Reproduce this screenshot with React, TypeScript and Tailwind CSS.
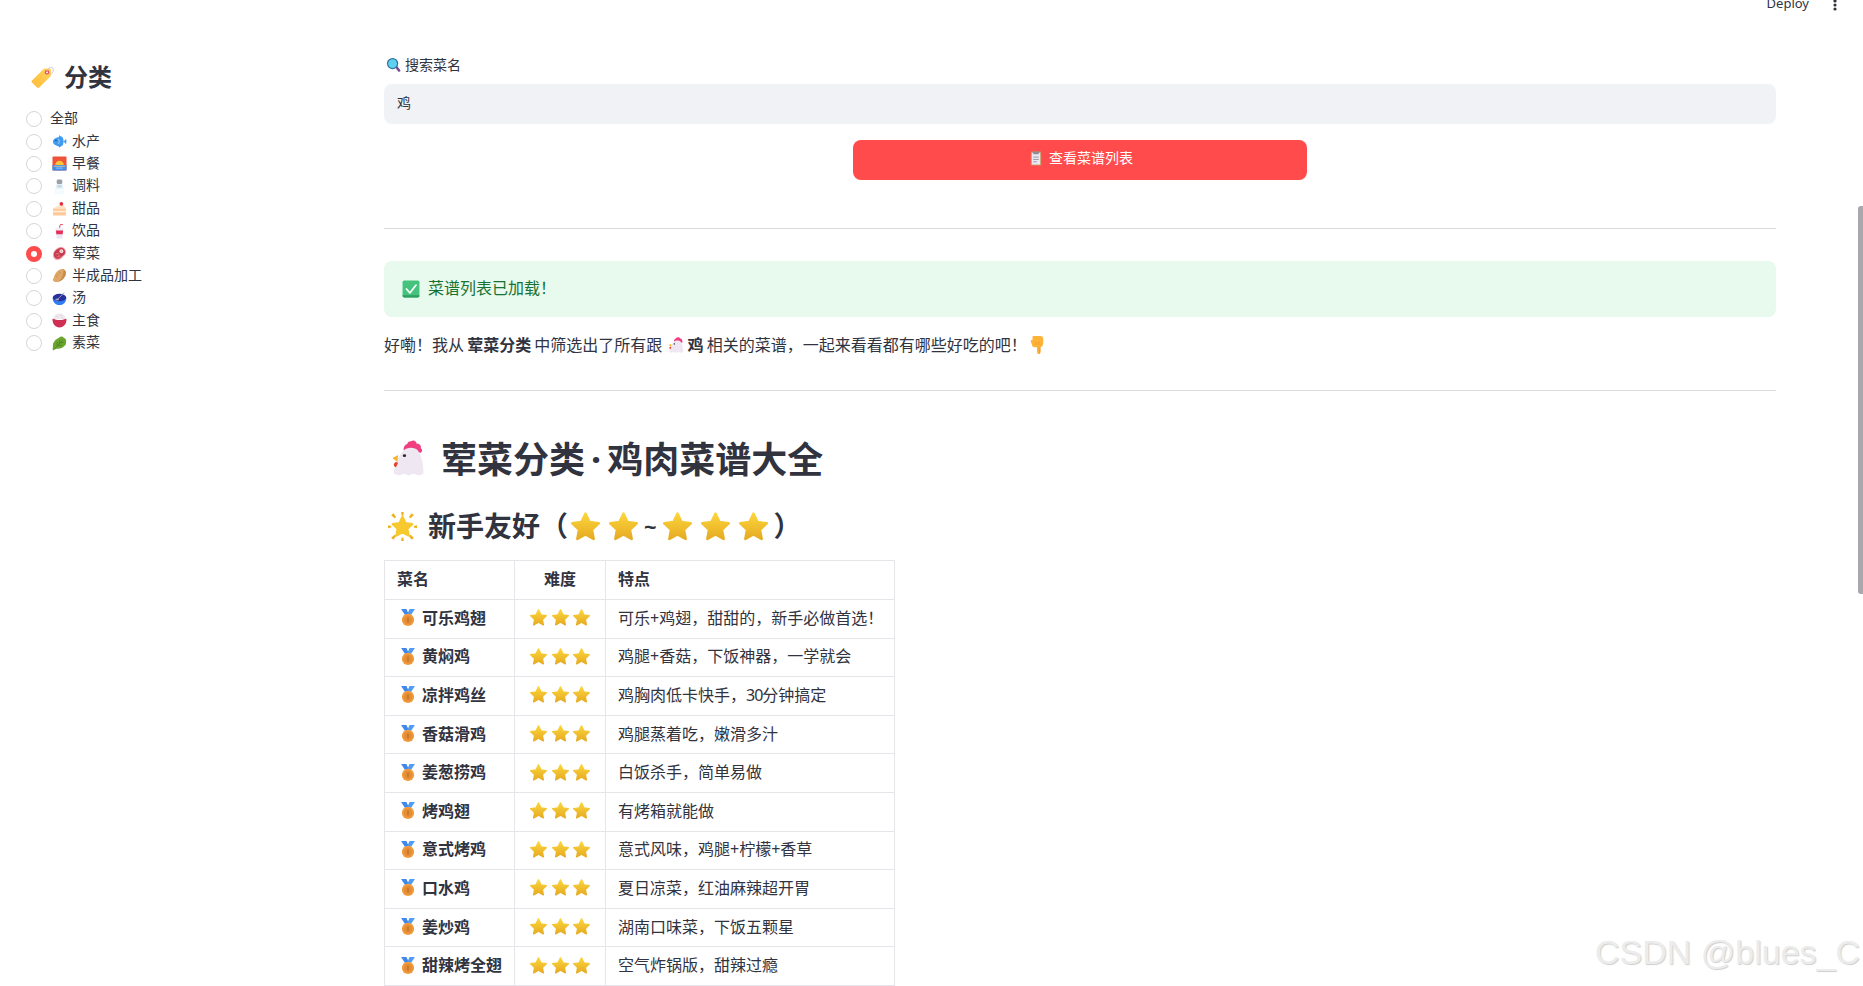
const cjk = "font-['Noto_Sans','Noto_Sans_CJK_SC',sans-serif]";

// --- EMOJI DRAWINGS ---
function Star({ className }: { className: string }) {
  return (
    <svg viewBox="2 2 28 28" className={className}>
      <defs>
        <linearGradient id="starFill" x1="0" y1="0" x2="0" y2="1">
          <stop offset="0" stopColor="#fbd53c" />
          <stop offset="1" stopColor="#e6ab22" />
        </linearGradient>
      </defs>
      <path
        d="M16 3.5l3.900 8.200 8.900 1.200-6.500 6.200 1.600 8.900-7.900-4.300-7.900 4.300 1.600-8.900-6.500-6.200 8.900-1.200z"
        fill="url(#starFill)"
        stroke="url(#starFill)"
        strokeWidth="2.400"
        strokeLinejoin="round"
      />
    </svg>
  );
}

function GlowStar({ className }: { className: string }) {
  return (
    <svg viewBox="0 0 32 32" className={className}>
      <path d="M16 5.500l3.300 6.800 7.400 1-5.400 5.100 1.400 7.400-6.700-3.600-6.700 3.600 1.400-7.400-5.400-5.100 7.400-1z" fill="#f8c92f" stroke="#f8c92f" strokeWidth="2.600" strokeLinejoin="round" />
      <g fill="#f0b21c">
        <path d="M14.500 0h3l-.6 4h-1.800z" />
        <path d="M14.500 32h3l-.6-4h-1.800z" />
        <path d="M0 14.500v3.500l3.500-1v-1.500z" />
        <path d="M32 14.500v3.500l-3.500-1v-1.500z" />
        <path d="M3.500 3.500l2.500-2 3 4-1.800 1.500z" />
        <path d="M28.500 3.500l-2.500-2-3 4 1.800 1.500z" />
        <path d="M3.500 28.500l2.500 2 3-4-1.800-1.500z" />
        <path d="M28.500 28.500l-2.500 2-3-4 1.800-1.500z" />
      </g>
    </svg>
  );
}

function Medal({ className }: { className: string }) {
  return (
    <svg viewBox="0 0 26 32" className={className}>
      <path d="M0 0h10l5 11H7z" fill="#3f87ea" />
      <path d="M26 0H16l-5 11h8z" fill="#4f9bf5" />
      <circle cx="13" cy="20.500" r="11.500" fill="#f09b3e" />
      <circle cx="13" cy="20.500" r="8" fill="#e68c33" />
      <rect x="12" y="16" width="2" height="9" rx="1" fill="#a86a28" />
    </svg>
  );
}

function Tag({ className }: { className: string }) {
  return (
    <svg viewBox="0 0 32 32" className={className}>
      <defs>
        <linearGradient id="tagFill" x1="0" y1="1" x2="1" y2="0">
          <stop offset="0" stopColor="#ffb93b" />
          <stop offset="1" stopColor="#ffd75a" />
        </linearGradient>
      </defs>
      <path d="M2 20.500L17 5.500c.6-.6 1.300-.9 2.200-.9l6.200.2c1 0 1.800.8 1.800 1.800l.2 6.400c0 .8-.3 1.600-.9 2.200L11.500 30c-.8.8-2 .8-2.800 0L2 23.300c-.8-.8-.8-2 0-2.800z" fill="url(#tagFill)" />
      <circle cx="22" cy="9.800" r="3" fill="#e8505b" />
      <circle cx="22" cy="9.800" r="1.300" fill="#fff" />
      <path d="M22 8c1-3.500 4-5.500 6.500-4.500 2.500 1 2.500 4.500.5 7-1 1.200-2.500 2-4 2" fill="none" stroke="#c9bfd8" strokeWidth="1.200" />
    </svg>
  );
}

function Fish() {
  return (
    <svg viewBox="0 0 32 32" className="h-full w-full">
      <path d="M16 2c1.500 3 3 3 5 4 4 2 3 8 4 10l5-6c1 4 1 8 0 12l-5-6c-1 2 0 8-5 10-1 .5-3 2-5 3 0-1-.5-2-1-3C7 25 2 21 2 16S7 8 14 7c1-1 1.500-3 2-5z" fill="#3f9bf0" />
      <circle cx="8.500" cy="14" r="1.500" fill="#10345c" />
      <path d="M14 11c2 3 2 7 0 10" fill="none" stroke="#a5d6fb" strokeWidth="2" />
    </svg>
  );
}

function Sunrise() {
  return (
    <svg viewBox="0 0 32 32" className="h-full w-full">
      <rect x="1" y="1" width="30" height="30" rx="2" fill="#f0533a" />
      <rect x="1" y="19" width="30" height="12" rx="1" fill="#3f8fee" />
      <path d="M7 19a9 9 0 0118 0z" fill="#ffc43a" />
      <rect x="4" y="21" width="24" height="1.500" fill="#ffd27a" />
      <rect x="9" y="25" width="14" height="1.500" fill="#b9dcfb" />
    </svg>
  );
}

function Salt() {
  return (
    <svg viewBox="0 0 32 32" className="h-full w-full">
      <rect x="10" y="1" width="12" height="10" rx="3" fill="#9ba1a6" />
      <path d="M9 11h14l2 17c0 2-1 3-3 3H10c-2 0-3-1-3-3z" fill="#dff1fa" />
      <path d="M8.500 20h15l1 8c0 2-1 3-3 3H10.500c-2 0-3-1-3-3z" fill="#f5fbfe" />
      <rect x="12" y="13" width="8" height="5" fill="#c6d5dc" />
    </svg>
  );
}

function Cake() {
  return (
    <svg viewBox="0 0 32 32" className="h-full w-full">
      <path d="M2 16L22 6l8 10z" fill="#ffe2c4" />
      <path d="M2 16h28v13c0 1-1 2-2 2H4c-1 0-2-1-2-2z" fill="#ffc99a" />
      <rect x="2" y="21" width="28" height="3" fill="#fff0df" />
      <circle cx="20" cy="6" r="4" fill="#e0303e" />
    </svg>
  );
}

function Cup() {
  return (
    <svg viewBox="0 0 32 32" className="h-full w-full">
      <path d="M16 9l1-6c.2-1.200 1-2 2.500-2H23" fill="none" stroke="#e0304a" strokeWidth="2" />
      <rect x="7" y="8" width="18" height="4" rx="1" fill="#f1eef6" />
      <path d="M8 12h16l-2 19H10z" fill="#ebe4f2" />
      <path d="M8.300 14h15.400l-.9 8H9.200z" fill="#e6305a" />
    </svg>
  );
}

function Meat() {
  return (
    <svg viewBox="0 0 32 32" className="h-full w-full">
      <path d="M18 2c6-1 12 4 12 11 0 3-1 6-4 8-4 3-7 9-14 9C6 30 2 25 2 19 2 11 10 3 18 2z" fill="#f3a7ae" />
      <path d="M18 4c5-1 10 3 10 9 0 3-1 5-4 7-4 2-6 7-12 7C7 27 4 23 4 18 4 11 11 5 18 4z" fill="#c83c50" />
      <circle cx="20" cy="11" r="4" fill="#fbe6e0" />
      <circle cx="20" cy="11" r="1.800" fill="#d9b3ae" />
      <path d="M8 18c3-3 5-2 7 0M11 23c3-2 5-2 7-1" stroke="#f0a0ac" strokeWidth="1.500" fill="none" />
    </svg>
  );
}

function Dumpling() {
  return (
    <svg viewBox="0 0 32 32" className="h-full w-full">
      <path d="M24 2c5 2 7 8 5 13-3 8-11 15-19 15-3 0-7-1-8-4-1-2 1-3 2-6C6 11 14 1 24 2z" fill="#e0a868" />
      <path d="M24 2c5 2 7 8 5 13-3 8-9 13-15 14 6-6 12-15 10-27z" fill="#c98b4a" />
      <path d="M11 12l3 3M15 8l3 3M8 17l3 3" stroke="#b97a3c" strokeWidth="1.500" />
    </svg>
  );
}

function Bowl() {
  return (
    <svg viewBox="0 0 32 32" className="h-full w-full">
      <ellipse cx="16" cy="15" rx="14.500" ry="9" fill="#2a2f9e" />
      <path d="M1.500 15c0 8 5 15 14.500 15s14.500-7 14.500-15c-3 5-8 7-14.500 7S4.500 20 1.500 15z" fill="#2f7df0" />
      <path d="M12 18L26 3" stroke="#9aa3b5" strokeWidth="2" />
      <ellipse cx="11" cy="18" rx="4" ry="2" fill="#9aa3b5" />
    </svg>
  );
}

function Rice() {
  return (
    <svg viewBox="0 0 32 32" className="h-full w-full">
      <path d="M3 13C3 5 9 1 16 1s13 4 13 12z" fill="#efe9ee" />
      <circle cx="11" cy="7" r="1.200" fill="#c9c0cc" />
      <circle cx="19" cy="5" r="1.200" fill="#c9c0cc" />
      <circle cx="22" cy="10" r="1.200" fill="#c9c0cc" />
      <path d="M1 14c0-1 1-2 2-2 3 2 8 3 13 3s10-1 13-3c1 0 2 1 2 2 0 9-6 17-15 17S1 23 1 14z" fill="#cf2f52" />
    </svg>
  );
}

function Leaf() {
  return (
    <svg viewBox="0 0 32 32" className="h-full w-full">
      <path d="M20 1c4 0 5 3 7 4s4 4 3 8c0 3 0 6-3 8-2 2-4 4-8 5-4 1-7 1-10 1L2 31c-1-4 0-7 0-10 0-4 0-7 3-9 1-3 3-4 6-6 3-1 6-5 9-5z" fill="#6aa62e" />
      <path d="M5 28L23 9M11 21v-8M16 16v-6M13 20h8M18 14h6" stroke="#3f7a1c" strokeWidth="1.300" fill="none" />
    </svg>
  );
}

function Magnifier({ className }: { className: string }) {
  return (
    <svg viewBox="0 0 32 32" className={className}>
      <path d="M19 20l4-3 7 9c1 1.500 1 3-.5 4s-3 .5-4-.8z" fill="#7b4a95" />
      <circle cx="14" cy="13" r="12" fill="#2f6f9e" />
      <circle cx="14" cy="13" r="9.500" fill="#5fd0ee" />
    </svg>
  );
}

function Notepad({ className }: { className: string }) {
  return (
    <svg viewBox="0 0 24 32" className={className}>
      <rect x="1" y="1" width="22" height="30" rx="2" fill="#c8965f" />
      <rect x="3" y="4" width="18" height="25" fill="#ece8f1" />
      <rect x="6" y="1" width="12" height="6" rx="1" fill="#8d8a99" />
      <rect x="6" y="12" width="12" height="2" fill="#9a97a6" />
      <rect x="6" y="17" width="12" height="2" fill="#9a97a6" />
      <rect x="6" y="22" width="8" height="2" fill="#9a97a6" />
    </svg>
  );
}

function CheckBox({ className }: { className: string }) {
  return (
    <svg viewBox="0 0 32 32" className={className}>
      <rect x="1" y="1" width="30" height="30" rx="3" fill="#45c37c" />
      <path d="M1 27h30v1c0 1.600-1.400 3-3 3H4c-1.600 0-3-1.400-3-3z" fill="#2e9f61" />
      <path d="M8 16l6 7L25 9" fill="none" stroke="#fff" strokeWidth="3" strokeLinecap="round" strokeLinejoin="round" />
    </svg>
  );
}

function Chicken({ className }: { className: string }) {
  return (
    <svg viewBox="5 1 24 31" preserveAspectRatio="none" className={className}>
      <path d="M19 2c2-1.500 4 0 4 2 2 0 3.500 1.500 3 4 1.500 1 1 3 0 4l-12-2c-.5-3 1-5 2.500-5.500C16.500 3 18 1.800 19 2z" fill="#ef3f80" />
      <path d="M14 10c2-3 8-3 10 0 3 5 4 14 4 20l-3.500 1.500L21 30l-3.500 1.500L14 30l-3.500 1.500L7 30c0-7 3-15 7-20z" fill="#efe8f2" />
      <path d="M10 14l-4 2.500L9.500 20z" fill="#f5b52e" />
      <path d="M8.500 20c-2 1-2 4 0 4.500l1.500-4z" fill="#e8402f" />
      <circle cx="14.500" cy="14.500" r="1.200" fill="#2c2c33" />
    </svg>
  );
}

function PointDown({ className }: { className: string }) {
  return (
    <svg viewBox="0 0 24 32" className={className}>
      <path d="M6 0h12c3 0 5 2 5 5v8c0 4-2 6-5 7v8.500c0 2-1.400 3.500-3 3.500s-3-1.500-3-3.500V20H8c-3 0-5-2-5-5l-2-5c-.6-1.800.2-3 2-3h1V2c0-1.200.8-2 2-2z" fill="#fdb338" />
      <path d="M18 20v8.500c0 2-1.400 3.500-3 3.500 1-.8 1.400-2 1.400-3.500V20z" fill="#e88f20" />
      <path d="M10 10v6M15 10v6" stroke="#e88f20" strokeWidth="1" />
    </svg>
  );
}

// --- DATA ---
const categories = [
  { name: '全部' },
  { name: '水产', icon: <Fish /> },
  { name: '早餐', icon: <Sunrise /> },
  { name: '调料', icon: <Salt /> },
  { name: '甜品', icon: <Cake /> },
  { name: '饮品', icon: <Cup /> },
  { name: '荤菜', icon: <Meat />, selected: true },
  { name: '半成品加工', icon: <Dumpling /> },
  { name: '汤', icon: <Bowl /> },
  { name: '主食', icon: <Rice /> },
  { name: '素菜', icon: <Leaf /> },
];

const recipes: [string, React.ReactNode][] = [
  ['可乐鸡翅', '可乐+鸡翅，甜甜的，新手必做首选！'],
  ['黄焖鸡', '鸡腿+香菇，下饭神器，一学就会'],
  ['凉拌鸡丝', <>鸡胸肉低卡快手，<span className="tracking-[-1px]">30</span>分钟搞定</>],
  ['香菇滑鸡', '鸡腿蒸着吃，嫩滑多汁'],
  ['姜葱捞鸡', '白饭杀手，简单易做'],
  ['烤鸡翅', '有烤箱就能做'],
  ['意式烤鸡', '意式风味，鸡腿+柠檬+香草'],
  ['口水鸡', '夏日凉菜，红油麻辣超开胃'],
  ['姜炒鸡', '湖南口味菜，下饭五颗星'],
  ['甜辣烤全翅', '空气炸锅版，甜辣过瘾'],
];

const cell = 'border border-[#e6e6ea] px-3 pb-[2px] text-base';

export default function App() {
  return (
    <div className={`relative h-[986px] overflow-hidden bg-white text-[#31333f] ${cjk}`}>
      {/* TOP BAR (cut off by the window) */}
      <div className="flex h-[10px] items-start justify-end overflow-visible pr-[26px]">
        <span className="mt-[-7px] text-[13px] leading-5">Deploy</span>
        <svg viewBox="0 0 4 14" className="ml-[24px] mt-[-2px] h-[14px] w-[4px] fill-[#31333f]">
          <circle cx="2" cy="3" r="1.600" />
          <circle cx="2" cy="7" r="1.600" />
          <circle cx="2" cy="11" r="1.600" />
        </svg>
      </div>

      <div className="flex">
        {/* SIDEBAR */}
        <aside className="w-[384px] shrink-0 pl-[26px] pt-[50px]">
          <div className="flex h-[34px] items-center">
            <Tag className="ml-[4px] h-[24px] w-[25px]" />
            <h2 className="ml-[9px] text-2xl font-bold">分类</h2>
          </div>
          <div className="mt-[14px] flex flex-col">
            {categories.map((c) => (
              <div key={c.name} className="flex h-[22.4px] items-center text-sm">
                {c.selected ? (
                  <span className="h-4 w-4 rounded-full border-[5px] border-[#ff4b4b] bg-white" />
                ) : (
                  <span className="h-4 w-4 rounded-full border border-[#d5d6da] bg-white" />
                )}
                {c.icon && <span className="ml-[10px] mr-[5px] h-[15px] w-[15px]">{c.icon}</span>}
                <span className={c.icon ? 'pb-[2px]' : 'ml-[8px] pb-[2px]'}>{c.name}</span>
              </div>
            ))}
          </div>
        </aside>

        {/* MAIN COLUMN */}
        <main className="min-w-0 flex-1 pr-[87px] pt-[45px]">
          <label className="flex h-5 items-center text-sm">
            <Magnifier className="ml-[2px] mr-[4px] h-[16px] w-[15px]" />
            搜索菜名
          </label>
          <div className="mt-[9px] flex h-10 items-center rounded-lg bg-[#f0f2f6] px-[13px] pb-[2px] text-sm">鸡</div>
          <button className="mx-auto mt-4 flex h-10 w-[454px] items-center justify-center rounded-lg bg-[#ff4b4b] pb-[4px] pl-[3px] text-sm text-white">
            <Notepad className="mr-[7px] h-[15px] w-[12px]" />
            查看菜谱列表
          </button>

          <hr className="mt-12 border-t border-[#d9dade]" />

          <div className="mt-8 flex h-14 items-center rounded-lg bg-[#e8f9ee] px-4 text-base text-[#177233]">
            <CheckBox className="ml-[2px] mr-[8px] h-[18px] w-[18px]" />
            <span className="pb-[2px]">菜谱列表已加载！</span>
          </div>

          <p className="mt-4 flex h-6 items-center whitespace-pre text-base leading-6 [word-spacing:-1px]">
            好嘞！我从 <b>荤菜分类</b> 中筛选出了所有跟 <Chicken className="ml-[2px] mr-[4px] h-[16px] w-[16px]" /> <b>鸡</b> 相关的菜谱，一起来看看都有哪些好吃的吧！
            <PointDown className="ml-[3px] h-[18px] w-[14px]" />
          </p>

          <hr className="mt-[33px] border-t border-[#d9dade]" />

          <h1 className="mt-[45px] flex h-11 items-center text-4xl font-bold">
            <Chicken className="ml-[7px] mr-[16px] h-[36px] w-[34px]" />
            <span className="pt-[3px]">
              荤菜分类<span className="mx-[6px]">·</span>鸡肉菜谱大全
            </span>
          </h1>

          <h2 className="mt-[26px] flex h-10 items-center text-[28px] font-bold">
            <GlowStar className="ml-[4px] mr-[11px] h-[29px] w-[29px]" />
            新手友好（
            <Star className="ml-[3px] mr-[9px] h-[29px] w-[29px]" />
            <Star className="h-[29px] w-[29px]" />
            <span className="mx-[6px] text-[22px] font-bold">~</span>
            <Star className="mr-[9px] h-[29px] w-[29px]" />
            <Star className="mr-[9px] h-[29px] w-[29px]" />
            <Star className="h-[29px] w-[29px]" />
            <span className="ml-[6px]">）</span>
          </h2>

          <table className="mt-[14px] w-[510px] table-fixed border-collapse">
            <colgroup>
              <col className="w-[130px]" />
              <col className="w-[91px]" />
              <col className="w-[289px]" />
            </colgroup>
            <thead>
              <tr className="h-[39px]">
                <th className={`${cell} text-left font-bold`}>菜名</th>
                <th className={`${cell} text-center font-bold`}>难度</th>
                <th className={`${cell} text-left font-bold`}>特点</th>
              </tr>
            </thead>
            <tbody>
              {recipes.map(([name, note]) => (
                <tr key={name} className="h-[38.6px]">
                  <td className={`${cell} whitespace-nowrap`}>
                    <span className="flex items-center font-bold">
                      <Medal className="ml-[4px] mr-[7px] h-[17px] w-[14px]" />
                      {name}
                    </span>
                  </td>
                  <td className={cell}>
                    <span className="flex items-center justify-center gap-[4.5px]">
                      <Star className="h-[17px] w-[17px]" />
                      <Star className="h-[17px] w-[17px]" />
                      <Star className="h-[17px] w-[17px]" />
                    </span>
                  </td>
                  <td className={`${cell} whitespace-nowrap`}>{note}</td>
                </tr>
              ))}
            </tbody>
          </table>
        </main>
      </div>

      {/* SCROLLBAR THUMB + WATERMARK sit on top of the page */}
      <div className="absolute right-0 top-[206px] h-[388px] w-[5px] rounded-l-[3px] bg-[#a9a9ad]" />
      <div className="absolute right-[3px] top-[932px] font-['Liberation_Sans',sans-serif] text-[34px] leading-10 text-[#ececec] [text-shadow:1px_1px_1px_#cfcfcf]">
        CSDN @blues_C
      </div>
    </div>
  );
}
